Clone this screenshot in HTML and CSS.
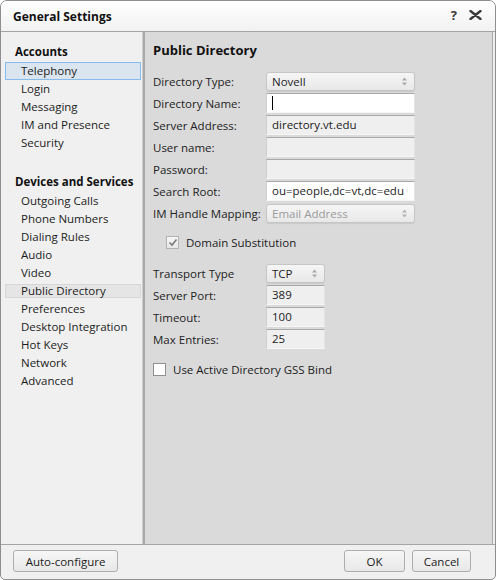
FILE: index.html
```html
<!DOCTYPE html>
<html>
<head>
<meta charset="utf-8">
<title>General Settings</title>
<link rel="stylesheet" href="styles.css">
</head>
<body>
<div class="window">
  <div class="titlebar">
    <span class="title">General Settings</span>
    <span class="tb-actions">
      <span class="help">?</span>
      <svg class="close" width="13" height="10" viewBox="0 0 13 10"><path d="M1.5 1 L11.5 9 M11.5 1 L1.5 9" stroke="#3a3a3a" stroke-width="2.4" stroke-linecap="round"/></svg>
    </span>
  </div>
  <div class="body">
    <nav class="sidebar">
      <div class="group-title">Accounts</div>
      <ul class="nav">
        <li class="selected">Telephony</li>
        <li>Login</li>
        <li>Messaging</li>
        <li>IM and Presence</li>
        <li>Security</li>
      </ul>
      <div class="group-title second">Devices and Services</div>
      <ul class="nav">
        <li>Outgoing Calls</li>
        <li>Phone Numbers</li>
        <li>Dialing Rules</li>
        <li>Audio</li>
        <li>Video</li>
        <li class="hover">Public Directory</li>
        <li>Preferences</li>
        <li>Desktop Integration</li>
        <li>Hot Keys</li>
        <li>Network</li>
        <li>Advanced</li>
      </ul>
    </nav>
    <main class="panel">
      <h1 class="heading">Public Directory</h1>
      <div class="form">
        <span class="label">Directory Type:</span>
        <div class="select">Novell<svg class="spin" width="7" height="9" viewBox="0 0 7 9"><path d="M3.5 0.5 L6 3.5 L1 3.5 Z M3.5 8.5 L6 5.5 L1 5.5 Z" fill="#a8a8a8"/></svg></div>
        <span class="label">Directory Name:</span>
        <div class="field white"><span class="caret"></span></div>
        <span class="label">Server Address:</span>
        <div class="field">directory.vt.edu</div>
        <span class="label">User name:</span>
        <div class="field"></div>
        <span class="label">Password:</span>
        <div class="field"></div>
        <span class="label">Search Root:</span>
        <div class="field white">ou=people,dc=vt,dc=edu</div>
        <span class="label">IM Handle Mapping:</span>
        <div class="select disabled">Email Address<svg class="spin" width="7" height="9" viewBox="0 0 7 9"><path d="M3.5 0.5 L6 3.5 L1 3.5 Z M3.5 8.5 L6 5.5 L1 5.5 Z" fill="#b4b4b4"/></svg></div>
      </div>
      <div class="check-row indent">
        <span class="box checked"><svg width="10" height="9" viewBox="0 0 10 9"><path d="M1.5 4.5 L4 7 L8.5 1.5" fill="none" stroke="#7a7a7a" stroke-width="1.6"/></svg></span>
        <span>Domain Substitution</span>
      </div>
      <div class="form narrow">
        <span class="label">Transport Type</span>
        <div class="select">TCP<svg class="spin" width="7" height="9" viewBox="0 0 7 9"><path d="M3.5 0.5 L6 3.5 L1 3.5 Z M3.5 8.5 L6 5.5 L1 5.5 Z" fill="#a8a8a8"/></svg></div>
        <span class="label">Server Port:</span>
        <div class="field">389</div>
        <span class="label">Timeout:</span>
        <div class="field">100</div>
        <span class="label">Max Entries:</span>
        <div class="field">25</div>
      </div>
      <div class="check-row gss">
        <span class="box"></span>
        <span>Use Active Directory GSS Bind</span>
      </div>
    </main>
  </div>
  <div class="footer">
    <button class="btn auto">Auto-configure</button>
    <button class="btn ok">OK</button>
    <button class="btn cancel">Cancel</button>
  </div>
</div>
</body>
</html>
```
FILE: styles.css
```css
html, body {
  margin: 0;
  padding: 0;
  background: #ffffff;
}
body {
  font-family: "Segoe UI", "Open Sans", "Noto Sans", sans-serif;
  font-size: 11.5px;
  color: #1c1c1c;
}
.window {
  width: 496px;
  height: 580px;
  box-sizing: border-box;
  border: 1px solid #8e8e8e;
  border-radius: 7px 7px 5px 5px;
  background: #f0f0f0;
  display: flex;
  flex-direction: column;
  overflow: hidden;
}
.titlebar {
  height: 30px;
  flex: none;
  border-bottom: 1px solid #a4a4a4;
  background: linear-gradient(#fefefe, #f2f2f2);
  display: flex;
  align-items: center;
  padding: 0 13px 0 12px;
}
.title {
  font-weight: bold;
  font-size: 12px;
  color: #111;
}
.tb-actions {
  margin-left: auto;
  display: flex;
  align-items: center;
  gap: 12px;
  margin-top: -3px;
}
.help {
  font-weight: bold;
  font-size: 13px;
  color: #3a3a3a;
}
.body {
  flex: 1;
  display: flex;
  min-height: 0;
}
.sidebar {
  width: 142px;
  flex: none;
  box-sizing: border-box;
  border-right: 1px solid #cdcdcd;
  padding-top: 11px;
}
.group-title {
  font-weight: bold;
  line-height: 18px;
  padding-left: 14px;
  margin-bottom: 1px;
  color: #111;
}
.group-title.second {
  margin-top: 21px;
}
.nav {
  list-style: none;
  margin: 0;
  padding: 0;
}
.nav li {
  height: 18px;
  line-height: 18px;
  margin: 0 1px 0 4px;
  padding-left: 16px;
  box-sizing: border-box;
  white-space: nowrap;
}
.nav li.selected {
  border: 1px solid #86bbeb;
  background: #dae5ef;
  padding-left: 15px;
  line-height: 16px;
}
.nav li.hover {
  height: 14px;
  margin: 2px 1px 2px 4px;
  line-height: 12px;
  border: 1px solid #d6d6d6;
  background: #e5e5e5;
  padding-left: 15px;
}
.panel {
  flex: 1;
  background: #dadada;
  border-left: 2px solid #a8a8a8;
  border-right: 1px solid #a8a8a8;
  margin-right: 2px;
  padding: 9px 8px 0 8px;
}
.heading {
  margin: 0 0 12px 0;
  font-size: 13px;
  line-height: 18px;
  font-weight: bold;
  color: #111;
}
.form {
  display: grid;
  grid-template-columns: 113px 149px;
  grid-auto-rows: 20px;
  row-gap: 2px;
  align-items: center;
}
.form.narrow {
  grid-template-columns: 113px 59px;
  margin-top: 14px;
}
.label {
  white-space: nowrap;
  color: #222;
}
.field {
  height: 20px;
  box-sizing: border-box;
  border: 1px solid;
  border-color: #a9a9a9 #e4e4e4 #f6f6f6 #cfcfcf;
  background: #efefef;
  padding: 0 5px;
  line-height: 18px;
  display: flex;
  align-items: center;
  white-space: nowrap;
}
.field.white {
  background: #ffffff;
}
.caret {
  display: inline-block;
  width: 1px;
  height: 14px;
  background: #000;
}
.select {
  height: 19px;
  box-sizing: border-box;
  border: 1px solid #c6c6c6;
  border-radius: 3px;
  background: linear-gradient(#f6f6f6, #e8e8e8);
  box-shadow: 0 1px 1px rgba(0, 0, 0, 0.08);
  display: flex;
  align-items: center;
  padding-left: 5px;
  position: relative;
  white-space: nowrap;
}
.select.disabled {
  color: #9a9a9a;
}
.select .spin {
  margin-left: auto;
  margin-right: 6px;
}
.check-row {
  display: flex;
  align-items: center;
  height: 14px;
  gap: 7px;
  margin-top: 12px;
}
.check-row.indent {
  padding-left: 13px;
}
.check-row.gss {
  margin-top: 13px;
  gap: 7px;
}
.box {
  width: 13px;
  height: 13px;
  box-sizing: border-box;
  border: 1px solid #8f8f8f;
  background: #ffffff;
  display: inline-flex;
  align-items: center;
  justify-content: center;
}
.box.checked {
  border-color: #b2b2b2;
  background: linear-gradient(#f7f7f7, #e6e6e6);
}
.footer {
  height: 35px;
  flex: none;
  box-sizing: border-box;
  border-top: 1px solid #a4a4a4;
  display: flex;
  align-items: flex-start;
  padding: 5px 24px 0 12px;
}
.btn {
  height: 22px;
  box-sizing: border-box;
  border: 1px solid #adadad;
  border-radius: 3px;
  background: linear-gradient(#f6f6f6, #e8e8e8);
  font-family: inherit;
  font-size: 11.5px;
  color: #1c1c1c;
  padding: 0;
}
.btn.auto {
  width: 105px;
}
.btn.ok {
  width: 61px;
  margin-left: auto;
}
.btn.cancel {
  width: 59px;
  margin-left: 7px;
}
```
